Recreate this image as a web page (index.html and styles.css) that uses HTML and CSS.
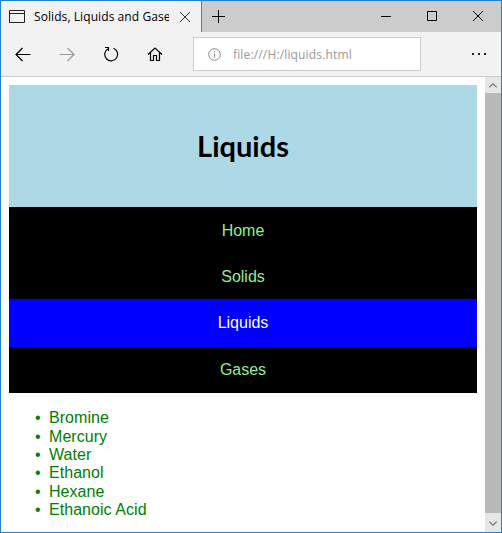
FILE: index.html
```html
<!DOCTYPE html>
<html lang="en">
<head>
<meta charset="utf-8">
<title>Solids, Liquids and Gases</title>
<link rel="stylesheet" href="styles.css">
</head>
<body>
<div class="window">
  <div class="titlebar">
    <div class="tab">
      <svg class="page-icon" width="16" height="13" viewBox="0 0 16 13"><path d="M.5.5h15v12H.5zM.5 3.5h15"/></svg>
      <span class="tab-title">Solids, Liquids and Gases</span>
      <svg class="tab-close" width="10" height="10" viewBox="0 0 10 10"><path d="M0 0l10 10M10 0L0 10"/></svg>
    </div>
    <svg class="new-tab" width="13" height="13" viewBox="0 0 13 13"><path d="M6.5 0v13M0 6.5h13"/></svg>
    <div class="controls">
      <svg width="10" height="10" viewBox="0 0 10 10"><path d="M0 5.5h10"/></svg>
      <svg width="10" height="10" viewBox="0 0 10 10"><path d="M.5.5h9v9h-9z"/></svg>
      <svg width="10" height="10" viewBox="0 0 10 10"><path d="M0 0l10 10M10 0L0 10"/></svg>
    </div>
  </div>
  <div class="toolbar">
    <div class="nav">
      <svg width="16" height="16" viewBox="0 0 16 16"><path d="M15.5 8.5H1M7.5 2L1 8.5 7.5 15"/></svg>
      <svg class="disabled" width="16" height="16" viewBox="0 0 16 16"><path d="M.5 8.5H15M8.5 2L15 8.5 8.5 15"/></svg>
      <svg width="16" height="16" viewBox="0 0 16 16"><path d="M10.5 2.3A6.5 6.5 0 1 1 5 2.7M2 1.500h3.500v3.500"/></svg>
      <svg width="16" height="16" viewBox="0 0 16 16"><path d="M1 8.500L8 2l7 6.500M3.500 6.500v8h3v-5h3v5h3v-8"/></svg>
    </div>
    <div class="address">
      <svg width="13" height="13" viewBox="0 0 13 13"><circle cx="6.5" cy="6.500" r="5.800"/><path d="M6.500 5.500v4M6.500 3v1.200"/></svg>
      <span class="url">file:///H:/liquids.html</span>
    </div>
    <svg class="more" width="15" height="2" viewBox="0 0 15 2"><path d="M0 0h2v2H0zM6 0h2v2H6zM12 0h2v2h-2z"/></svg>
  </div>
  <div class="viewport">
    <main class="page">
      <h1 class="banner">Liquids</h1>
      <nav class="menu">
        <a class="item">Home</a>
        <a class="item">Solids</a>
        <a class="item current">Liquids</a>
        <a class="item last">Gases</a>
      </nav>
      <ul class="list">
        <li>Bromine</li>
        <li>Mercury</li>
        <li>Water</li>
        <li>Ethanol</li>
        <li>Hexane</li>
        <li>Ethanoic Acid</li>
      </ul>
    </main>
    <div class="scrollbar">
      <div class="arrow up"><svg width="8" height="5" viewBox="0 0 8 5"><path d="M.3 4.300L4 .8l3.700 3.500"/></svg></div>
      <div class="thumb"></div>
      <div class="arrow down"><svg width="8" height="5" viewBox="0 0 8 5"><path d="M.3.700L4 4.200 7.700.7"/></svg></div>
    </div>
  </div>
</div>
</body>
</html>
```
FILE: styles.css
```css
* { box-sizing: border-box; }
body { margin: 0; overflow: hidden; }
svg { display: block; flex: none; fill: none; stroke: #000; stroke-width: 1; }

.window {
  width: 502px;
  height: 533px;
  display: flex;
  flex-direction: column;
  border: 1px solid #1f80d4;
  background: #fff;
  font-family: "Open Sans", sans-serif;
}

.titlebar { display: flex; height: 31px; background: #ccc; }
.tab {
  display: flex;
  align-items: center;
  width: 201px;
  padding-left: 8px;
  background: #f2f2f2;
  border-right: 1px solid #777;
}
.page-icon { margin-right: 9px; stroke: #222; }
.tab-title {
  width: 135px;
  overflow: hidden;
  white-space: nowrap;
  font-size: 12px;
  line-height: 18px;
  letter-spacing: 0.08px;
}
.tab-close { margin-left: 11px; stroke: #333; }
.new-tab { margin: 9px 0 0 10px; }
.controls { display: flex; gap: 36px; margin: 10px 18px 0 auto; }

.toolbar {
  display: flex;
  height: 45px;
  background: #f2f2f2;
  border-bottom: 1px solid #ccc;
}
.nav { display: flex; gap: 28px; width: 192px; padding: 14px 0 0 14px; }
.nav svg { stroke-width: 1.2; }
.nav .disabled { stroke: #999; }
.address {
  display: flex;
  align-items: center;
  width: 228px;
  height: 34px;
  margin-top: 5px;
  padding-left: 14px;
  background: #fff;
  border: 1px solid #ccc;
}
.address svg { stroke: #888; }
.url { margin: 1px 0 0 12px; font-size: 12px; line-height: 18px; letter-spacing: 0.15px; color: #999; }
.more { margin: 21px 14px 0 auto; fill: #222; stroke: none; }

.viewport { display: flex; flex: 1; min-height: 0; }
.page {
  flex: 1;
  padding: 8px;
  font: 16px/18.4px "Liberation Sans", Arial, sans-serif;
}
.banner {
  height: 122px;
  margin: 0;
  background: lightblue;
  text-align: center;
  font: bold 29px/122px Lato, sans-serif;
}
.menu { background: #000; text-align: center; }
.item { display: block; height: 46px; line-height: 47px; color: lightgreen; }
.current { height: 48px; background: blue; color: #fff; }
.last { line-height: 45px; }
.list { margin: 16.2px 0 0; padding-left: 26px; color: green; list-style: none; }
.list li { display: flex; letter-spacing: 0.05px; }
.list li::before { content: "•"; width: 14px; }

.scrollbar { display: flex; flex-direction: column; width: 16px; background: #b9b9b9; }
.arrow { display: flex; align-items: center; justify-content: center; background: #e6e6e6; }
.arrow svg { stroke: #777; stroke-width: 1.2; }
.up { height: 16px; }
.thumb { flex: 1; }
.down { height: 19px; padding-top: 2px; }
```
